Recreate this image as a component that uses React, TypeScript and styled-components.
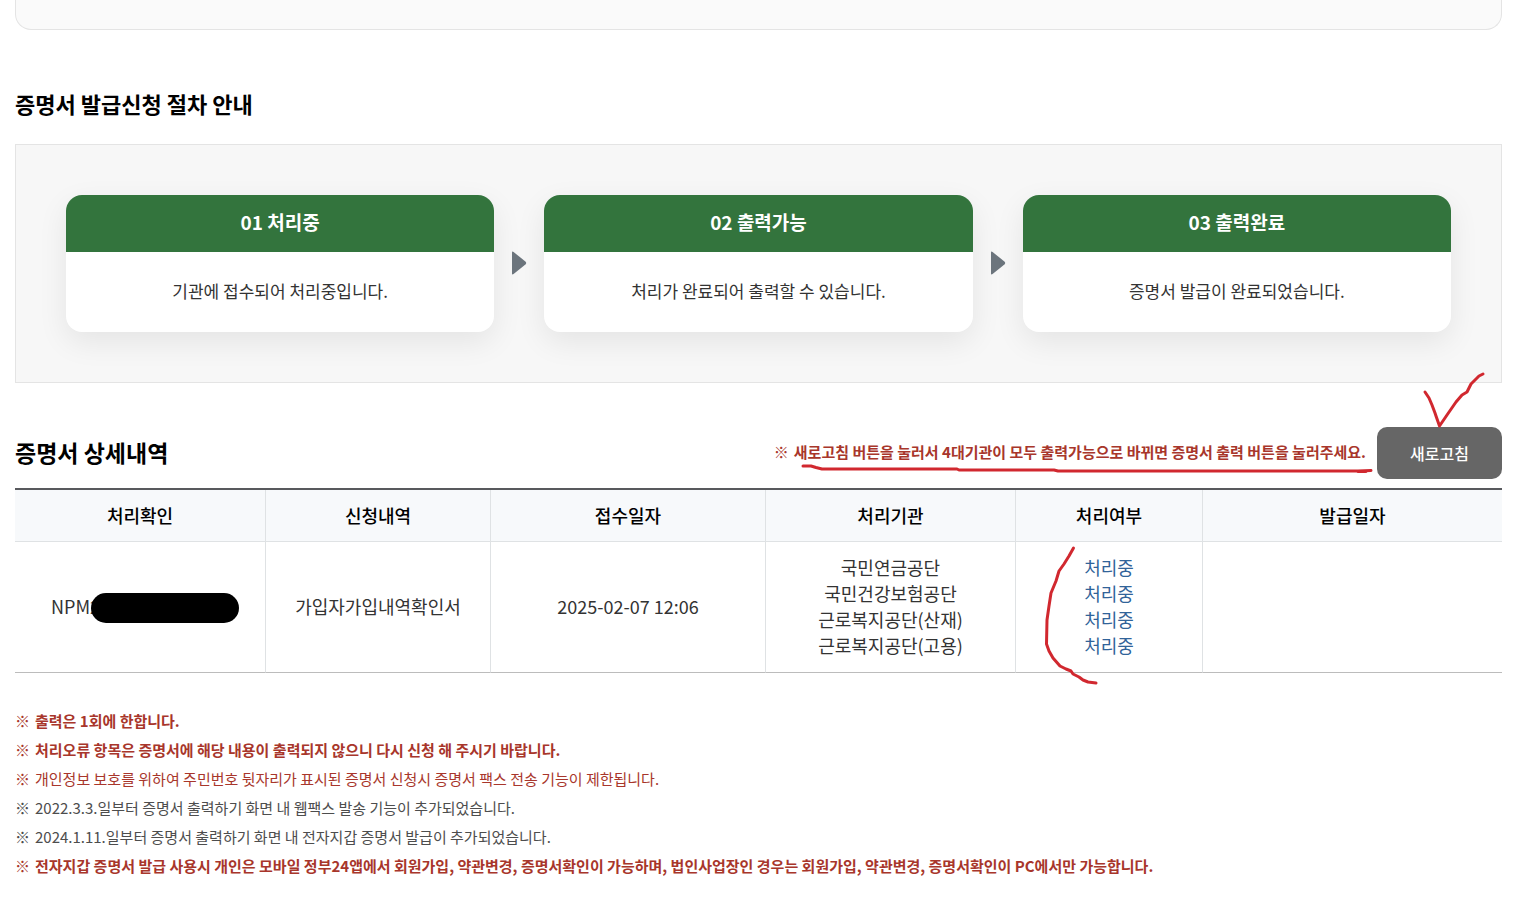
import React from "react";
import styled, { createGlobalStyle } from "styled-components";

const GlobalStyle = createGlobalStyle`
  *, *::before, *::after { box-sizing: border-box; }
  body {
    margin: 0;
    background: #fff;
    color: #333;
    font-family: "Noto Sans CJK KR", "Noto Sans", sans-serif;
    font-size: 18px;
    line-height: 26px;
  }
`;

const Page = styled.main`
  padding: 0 16px 16px 15px;
`;

const SummaryPanel = styled.section`
  height: 30px;
  border: 1px solid #e4e4e4;
  border-top: 0;
  border-radius: 0 0 16px 16px;
  background: #fafafa;
`;

const SectionTitle = styled.h2<{ $large?: boolean }>`
  margin: 0;
  padding-bottom: 2px;
  color: #000;
  font-size: ${(p) => (p.$large ? 23 : 22)}px;
  font-weight: 700;
  line-height: 34px;
`;

const ProcessSection = styled.section`
  padding-top: 56px;
`;

const ProcessPanel = styled.ol`
  display: flex;
  margin: 22px 0 0;
  padding: 50px;
  border: 1px solid #e4e4e4;
  background: #f7f7f7;
  list-style: none;
`;

const StepItem = styled.li`
  flex: 1;
  border-radius: 16px;
  background: #fff;
  box-shadow: 0 10px 30px rgba(0, 0, 0, 0.08);
  text-align: center;
`;

const StepHeading = styled.h3`
  margin: 0;
  padding: 13px 0 16px;
  border-radius: 16px 16px 0 0;
  background: #33743d;
  color: #fff;
  font-size: 19px;
  font-weight: 700;
  line-height: 28px;
`;

const StepText = styled.p`
  margin: 0;
  padding: 26px 16px 28px;
  font-size: 17px;
  line-height: 26px;
`;

const StepArrow = styled.li`
  display: flex;
  flex: 0 0 50px;
  align-items: center;
  justify-content: center;
  padding-bottom: 2px;
`;

const DetailHeader = styled.div`
  display: flex;
  align-items: center;
  margin-top: 44px;
  margin-bottom: 9px;
`;

const Notice = styled.p`
  position: relative;
  margin: 0 11px 0 auto;
  padding-bottom: 2px;
  color: #a8362b;
  font-size: 15px;
  font-weight: 700;
`;

const Mark = styled.span`
  display: inline-block;
  width: 20px;
`;

const RefreshWrap = styled.div`
  position: relative;
`;

const RefreshButton = styled.button`
  display: block;
  width: 125px;
  height: 52px;
  padding: 0;
  border: 0;
  border-radius: 10px;
  background: #666;
  color: #fff;
  font-family: inherit;
  font-size: 16px;
  font-weight: 500;
  cursor: pointer;
`;

const PenStroke = styled.svg`
  position: absolute;
  overflow: visible;
  fill: none;
  stroke: #d1282f;
  stroke-width: 3;
  stroke-linecap: round;
  stroke-linejoin: round;
  pointer-events: none;
`;

const CheckStroke = styled(PenStroke)`
  left: 45px;
  bottom: 53px;
`;

const UnderStroke = styled(PenStroke)`
  left: 26px;
  top: 24px;
`;

const BracketStroke = styled(PenStroke)`
  left: 28px;
  top: 4px;
`;

const DetailTable = styled.table`
  width: 100%;
  border-collapse: separate;
  border-spacing: 0;
  border-top: 2px solid #58595d;
  table-layout: fixed;
  text-align: center;
`;

const HeadCell = styled.th`
  padding: 12px 0 13px;
  border-bottom: 1px solid #dfe2e4;
  background: #f7f9fb;
  color: #000;
  font-weight: 500;

  & + & { border-left: 1px solid #dfe2e4; }
`;

const Cell = styled.td`
  position: relative;
  padding: 12px 0 14px;
  border-bottom: 1px solid #bcbcbc;

  & + & { border-left: 1px solid #dfe2e4; }
`;

const Receipt = styled.span`
  position: relative;
  display: inline-block;
  width: 178px;
  text-align: left;
`;

const Redaction = styled.span`
  position: absolute;
  top: 0;
  left: 40px;
  width: 148px;
  height: 30px;
  border-radius: 15px;
  background: #000;
`;

const LineList = styled.ul`
  margin: 0;
  padding: 0;
  list-style: none;
`;

const StatusLink = styled.a`
  color: #316399;
  text-decoration: none;
`;

const Notes = styled.ul`
  margin: 33px 0 0;
  padding: 0;
  font-size: 15px;
  line-height: 29px;
  list-style: none;
`;

const Note = styled.li<{ $red?: boolean; $strong?: boolean }>`
  color: ${(p) => (p.$red ? "#a8362b" : "#4d4d4d")};
  font-weight: ${(p) => (p.$strong ? 700 : 400)};
`;

const steps = [
  { title: "01 처리중", text: "기관에 접수되어 처리중입니다." },
  { title: "02 출력가능", text: "처리가 완료되어 출력할 수 있습니다." },
  { title: "03 출력완료", text: "증명서 발급이 완료되었습니다." },
];

const columns = [
  { label: "처리확인", width: 250 },
  { label: "신청내역", width: 225 },
  { label: "접수일자", width: 275 },
  { label: "처리기관", width: 250 },
  { label: "처리여부", width: 187 },
  { label: "발급일자", width: 300 },
];
const columnTotal = columns.reduce((sum, c) => sum + c.width, 0);

const agencies = ["국민연금공단", "국민건강보험공단", "근로복지공단(산재)", "근로복지공단(고용)"];

const notes = [
  { text: "출력은 1회에 한합니다.", red: true, strong: true },
  { text: "처리오류 항목은 증명서에 해당 내용이 출력되지 않으니 다시 신청 해 주시기 바랍니다.", red: true, strong: true },
  { text: "개인정보 보호를 위하여 주민번호 뒷자리가 표시된 증명서 신청시 증명서 팩스 전송 기능이 제한됩니다.", red: true },
  { text: "2022.3.3.일부터 증명서 출력하기 화면 내 웹팩스 발송 기능이 추가되었습니다." },
  { text: "2024.1.11.일부터 증명서 출력하기 화면 내 전자지갑 증명서 발급이 추가되었습니다." },
  {
    text: "전자지갑 증명서 발급 사용시 개인은 모바일 정부24앱에서 회원가입, 약관변경, 증명서확인이 가능하며, 법인사업장인 경우는 회원가입, 약관변경, 증명서확인이 PC에서만 가능합니다.",
    red: true,
    strong: true,
  },
];

export default function App() {
  return (
    <>
      <GlobalStyle />
      <Page>
        <SummaryPanel />

        <ProcessSection>
          <SectionTitle>증명서 발급신청 절차 안내</SectionTitle>
          <ProcessPanel>
            {steps.map((step, i) => (
              <React.Fragment key={step.title}>
                {i > 0 && (
                  <StepArrow aria-hidden="true">
                    <svg width="16" height="24" viewBox="0 0 16 24">
                      <path d="M1 1.5Q1 0 2.6 1L14.4 10.6Q16 12 14.4 13.4L2.6 23Q1 24 1 22.5Z" fill="#6c757d" />
                    </svg>
                  </StepArrow>
                )}
                <StepItem>
                  <StepHeading>{step.title}</StepHeading>
                  <StepText>{step.text}</StepText>
                </StepItem>
              </React.Fragment>
            ))}
          </ProcessPanel>
        </ProcessSection>

        <section>
          <DetailHeader>
            <SectionTitle $large>증명서 상세내역</SectionTitle>
            <Notice>
              <Mark>※</Mark>
              새로고침 버튼을 눌러서 4대기관이 모두 출력가능으로 바뀌면 증명서 출력 버튼을 눌러주세요.
              <UnderStroke width="572" height="10" viewBox="0 0 572 10" aria-hidden="true">
                <path d="M3 3H11L16 4.500L22 6H157L159 7H254L258 8H558L571 7.500M558 8.500H566" />
              </UnderStroke>
            </Notice>
            <RefreshWrap>
              <RefreshButton type="button">새로고침</RefreshButton>
              <CheckStroke width="64" height="54" viewBox="0 0 64 54" aria-hidden="true">
                <path d="M3 20L7 26L10 33L13 41L14 44L17.500 54L25 43L34 30L40 23L45 20L49 12L54 7L57 4L61 2" />
              </CheckStroke>
            </RefreshWrap>
          </DetailHeader>

          <DetailTable>
            <colgroup>
              {columns.map((c) => (
                <col key={c.label} style={{ width: `${(c.width / columnTotal) * 100}%` }} />
              ))}
            </colgroup>
            <thead>
              <tr>
                {columns.map((c) => (
                  <HeadCell key={c.label} scope="col">{c.label}</HeadCell>
                ))}
              </tr>
            </thead>
            <tbody>
              <tr>
                <Cell>
                  <Receipt>
                    NPM2
                    <Redaction />
                  </Receipt>
                </Cell>
                <Cell>가입자가입내역확인서</Cell>
                <Cell>2025-02-07 12:06</Cell>
                <Cell>
                  <LineList>
                    {agencies.map((name) => (
                      <li key={name}>{name}</li>
                    ))}
                  </LineList>
                </Cell>
                <Cell>
                  <LineList>
                    {agencies.map((name) => (
                      <li key={name}>
                        <StatusLink href="#status">처리중</StatusLink>
                      </li>
                    ))}
                  </LineList>
                  <BracketStroke width="54" height="140" viewBox="0 0 54 140" aria-hidden="true">
                    <path d="M29.500 2L25 10L20 18L15 25L12 35L7 47L5 60L3 74L2.500 98L5 105L9 112L16 120L22 123L27 125L29 128L35 131L39 134L44 136L52 137" />
                  </BracketStroke>
                </Cell>
                <Cell />
              </tr>
            </tbody>
          </DetailTable>

          <Notes>
            {notes.map((note) => (
              <Note key={note.text} $red={note.red} $strong={note.strong}>
                <Mark>※</Mark>
                {note.text}
              </Note>
            ))}
          </Notes>
        </section>
      </Page>
    </>
  );
}
